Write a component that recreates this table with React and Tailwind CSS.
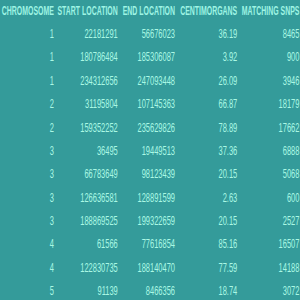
const rows = [
  ["1", "22181291", "56676023", "36.19", "8465"],
  ["1", "180786484", "185306087", "3.92", "900"],
  ["1", "234312656", "247093448", "26.09", "3946"],
  ["2", "31195804", "107145363", "66.87", "18179"],
  ["2", "159352252", "235629826", "78.89", "17662"],
  ["3", "36495", "19449513", "37.36", "6888"],
  ["3", "66783649", "98123439", "20.15", "5068"],
  ["3", "126636581", "128891599", "2.63", "600"],
  ["3", "188869525", "199322659", "20.15", "2527"],
  ["4", "61566", "77616854", "85.16", "16507"],
  ["4", "122830735", "188140470", "77.59", "14188"],
  ["5", "91139", "8466356", "18.74", "3072"],
];

const heads = ["CHROMOSOME", "START LOCATION", "END LOCATION", "CENTIMORGANS", "MATCHING SNPS"];

export default function App() {
  return (
    <div className="w-[300px] h-[300px] overflow-hidden bg-[#349b9a] font-['Liberation_Sans',Arial,sans-serif]">
      {/* squeezed to look like the narrow spreadsheet font */}
      <div className="w-[540px] origin-top-left scale-x-[0.5556]">
        <div className="grid grid-cols-[97px_115px_103px_112px_112px] h-[22px] items-center text-right text-[12.5px] font-bold text-[#9ef4e4]">
          {heads.map(h => <div key={h} className="whitespace-nowrap leading-none">{h}</div>)}
        </div>
        {rows.map((r, i) => (
          <div key={i} className="grid grid-cols-[97px_115px_103px_112px_112px] h-[23.4px] items-center text-right text-[13.5px] text-[#aaf8e4]">
            {r.map((c, j) => <div key={j} className="leading-none">{c}</div>)}
          </div>
        ))}
      </div>
    </div>
  );
}
